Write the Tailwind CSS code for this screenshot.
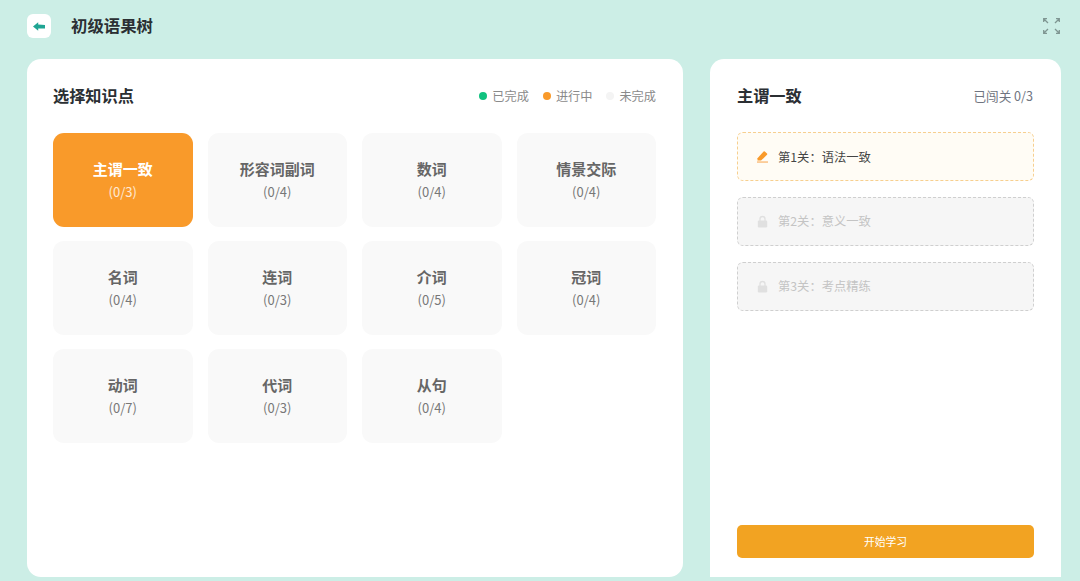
<!DOCTYPE html>
<html lang="zh">
<head>
<meta charset="utf-8">
<script src="https://cdn.jsdelivr.net/npm/@tailwindcss/browser@4"></script>
</head>
<body class="m-0 w-[1080px] h-[581px] overflow-hidden bg-[#cceee6] font-['Noto_Sans_CJK_SC','Noto_Sans',sans-serif]">
<header class="h-[59px] flex items-center pl-[26.5px] pr-[20px] pb-[7px]">
  <div class="w-[24px] h-[24px] rounded-[6px] bg-white flex items-center justify-center">
    <svg width="12" height="9" viewBox="0 0 12 9"><path d="M0 4.5 L5.2 0.2 V2.6 L12 3 V6.4 L5.2 6.6 V8.8 Z" fill="#1fa593"/></svg>
  </div>
  <h1 class="ml-[20.5px] pb-[2px] text-[16.4px] leading-[24px] font-bold text-[#2b2f33]">初级语果树</h1>
  <svg class="ml-auto" width="17" height="16" viewBox="0 0 17 16" fill="none" stroke="#7f9692" stroke-width="1.3"><path d="M0.7 4V0.7H4M0.7 0.7L5 5M13 0.7H16.3V4M16.3 0.7L12 5M0.7 12V15.3H4M0.7 15.3L5 11M13 15.3H16.3V12M16.3 15.3L12 11"/></svg>
</header>
<main class="flex items-start pl-[26.5px] gap-[27px]">
  <section class="w-[656.5px] h-[518px] bg-white rounded-[14px] pl-[26.5px] pr-[27px] pt-[25px]">
    <div class="flex items-center justify-between h-[24px]">
      <h2 class="pb-[2px] text-[16.2px] leading-[24px] font-bold text-[#2b2f33]">选择知识点</h2>
      <div class="flex items-center gap-[14px] text-[12.2px] leading-[18px] text-[#8a8a8a]">
        <span class="flex items-center gap-[5px]"><i class="w-[8px] h-[8px] rounded-full bg-[#10c27f]"></i>已完成</span>
        <span class="flex items-center gap-[5px]"><i class="w-[8px] h-[8px] rounded-full bg-[#f99a2a]"></i>进行中</span>
        <span class="flex items-center gap-[5px]"><i class="w-[8px] h-[8px] rounded-full bg-[#f4f4f4]"></i>未完成</span>
      </div>
    </div>
    <div class="grid grid-cols-4 auto-rows-[94px] gap-x-[15px] gap-y-[14px] mt-[25px]">
      <div class="rounded-[11px] bg-[#f99a2a] flex flex-col items-center justify-center pb-[1px] text-white"><b class="text-[15px] leading-[22px] font-bold">主谓一致</b><span class="text-[13px] leading-[18px] text-white/80 mt-[3px]">(0/3)</span></div>
      <div class="rounded-[11px] bg-[#f9f9f9] flex flex-col items-center justify-center pb-[1px]"><b class="text-[15px] leading-[22px] font-bold text-[#666666]">形容词副词</b><span class="text-[13px] leading-[18px] text-[#777777] mt-[3px]">(0/4)</span></div>
      <div class="rounded-[11px] bg-[#f9f9f9] flex flex-col items-center justify-center pb-[1px]"><b class="text-[15px] leading-[22px] font-bold text-[#666666]">数词</b><span class="text-[13px] leading-[18px] text-[#777777] mt-[3px]">(0/4)</span></div>
      <div class="rounded-[11px] bg-[#f9f9f9] flex flex-col items-center justify-center pb-[1px]"><b class="text-[15px] leading-[22px] font-bold text-[#666666]">情景交际</b><span class="text-[13px] leading-[18px] text-[#777777] mt-[3px]">(0/4)</span></div>
      <div class="rounded-[11px] bg-[#f9f9f9] flex flex-col items-center justify-center pb-[1px]"><b class="text-[15px] leading-[22px] font-bold text-[#666666]">名词</b><span class="text-[13px] leading-[18px] text-[#777777] mt-[3px]">(0/4)</span></div>
      <div class="rounded-[11px] bg-[#f9f9f9] flex flex-col items-center justify-center pb-[1px]"><b class="text-[15px] leading-[22px] font-bold text-[#666666]">连词</b><span class="text-[13px] leading-[18px] text-[#777777] mt-[3px]">(0/3)</span></div>
      <div class="rounded-[11px] bg-[#f9f9f9] flex flex-col items-center justify-center pb-[1px]"><b class="text-[15px] leading-[22px] font-bold text-[#666666]">介词</b><span class="text-[13px] leading-[18px] text-[#777777] mt-[3px]">(0/5)</span></div>
      <div class="rounded-[11px] bg-[#f9f9f9] flex flex-col items-center justify-center pb-[1px]"><b class="text-[15px] leading-[22px] font-bold text-[#666666]">冠词</b><span class="text-[13px] leading-[18px] text-[#777777] mt-[3px]">(0/4)</span></div>
      <div class="rounded-[11px] bg-[#f9f9f9] flex flex-col items-center justify-center pb-[1px]"><b class="text-[15px] leading-[22px] font-bold text-[#666666]">动词</b><span class="text-[13px] leading-[18px] text-[#777777] mt-[3px]">(0/7)</span></div>
      <div class="rounded-[11px] bg-[#f9f9f9] flex flex-col items-center justify-center pb-[1px]"><b class="text-[15px] leading-[22px] font-bold text-[#666666]">代词</b><span class="text-[13px] leading-[18px] text-[#777777] mt-[3px]">(0/3)</span></div>
      <div class="rounded-[11px] bg-[#f9f9f9] flex flex-col items-center justify-center pb-[1px]"><b class="text-[15px] leading-[22px] font-bold text-[#666666]">从句</b><span class="text-[13px] leading-[18px] text-[#777777] mt-[3px]">(0/4)</span></div>
    </div>
  </section>
  <aside class="w-[351px] h-[518px] bg-white rounded-t-[14px] pl-[27px] pr-[27px] pt-[25px] flex flex-col">
    <div class="flex items-center justify-between h-[24px]">
      <h2 class="pb-[2px] text-[16.2px] leading-[24px] font-bold text-[#2b2f33]">主谓一致</h2>
      <span class="mr-[1px] text-[12.6px] leading-[18px] text-[#6f7480]">已闯关 0/3</span>
    </div>
    <div class="mt-[24px] flex flex-col gap-[16px]">
      <div class="h-[49px] rounded-[6px] border border-dashed border-[#f7cf8f] bg-[#fffcf5] flex items-center pl-[18px] text-[12.3px] text-[#444444]">
        <svg width="13" height="13" viewBox="0 0 13 13"><path d="M1.5 8.3 L7.6 1.6 a0.9 0.9 0 0 1 1.2 0 L11 3.6 a0.9 0.9 0 0 1 0 1.2 L5 10.6 H1.5 Z" fill="#f99a2a"/><path d="M1 11.3 H12 V12.8 H1 Z" fill="#fbc083"/></svg>
        <span class="ml-[9px] pt-[1px]">第1关：语法一致</span>
      </div>
      <div class="h-[49px] rounded-[6px] border border-dashed border-[#cfcfcf] bg-[#f6f6f6] flex items-center pl-[18px] text-[12.3px] text-[#c4c4c4]">
        <svg width="13" height="13" viewBox="0 0 13 13"><path d="M4 6V4a2.5 2.5 0 0 1 5 0V6" fill="none" stroke="#e0e0e0" stroke-width="1.3"/><rect x="1.8" y="5.5" width="9.4" height="7" rx="1.2" fill="#e0e0e0"/></svg>
        <span class="ml-[9px]">第2关：意义一致</span>
      </div>
      <div class="h-[49px] rounded-[6px] border border-dashed border-[#cfcfcf] bg-[#f6f6f6] flex items-center pl-[18px] text-[12.3px] text-[#c4c4c4]">
        <svg width="13" height="13" viewBox="0 0 13 13"><path d="M4 6V4a2.5 2.5 0 0 1 5 0V6" fill="none" stroke="#e0e0e0" stroke-width="1.3"/><rect x="1.8" y="5.5" width="9.4" height="7" rx="1.2" fill="#e0e0e0"/></svg>
        <span class="ml-[9px]">第3关：考点精练</span>
      </div>
    </div>
    <button class="mt-auto mb-[19px] h-[33px] rounded-[5px] bg-[#f2a322] text-white text-[10.8px]">开始学习</button>
  </aside>
</main>
</body>
</html>
